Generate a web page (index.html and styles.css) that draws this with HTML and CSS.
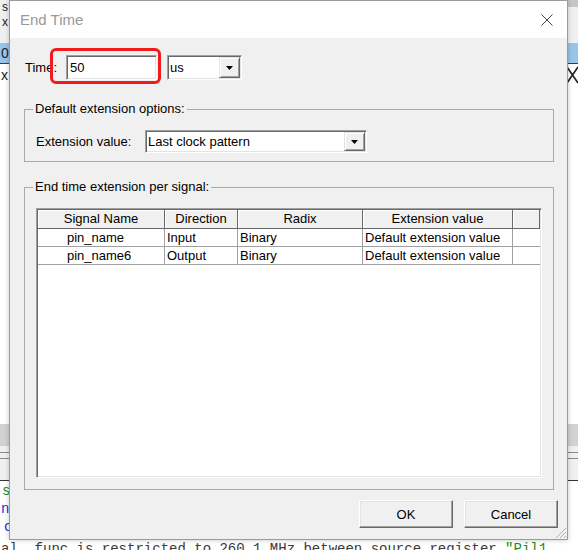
FILE: index.html
```html
<!DOCTYPE html>
<html>
<head>
<meta charset="utf-8">
<title>End Time</title>
<link rel="stylesheet" href="styles.css">
</head>
<body>
<div class="app">
  <div class="bg-top">
    <div class="bg-frag"><span>s</span><span>x</span></div>
    <div class="bg-top-right"></div>
  </div>
  <div class="bg-sel"><span class="bg-char">0</span></div>
  <div class="bg-wave">
    <span class="bg-char">x</span>
    <svg class="bg-x" width="11" height="18" viewBox="0 0 11 18"><path d="M0 1 L11 17 M0 17 L11 1" stroke="#222" stroke-width="1.6" fill="none"/></svg>
  </div>
  <div class="bg-fill"></div>
  <div class="bg-bar"></div>
  <div class="bg-lines"><div class="bg-line"></div><div class="bg-line"></div></div>
  <div class="bg-console">
    <div class="c-line c-green c-indent">s</div>
    <div class="c-line c-blue">ni</div>
    <div class="c-line c-blue c-indent2">c</div>
    <div class="c-line c-last">al  func is restricted to 260.1 MHz between source register <span class="c-green">"Pil1</span></div>
  </div>
</div>

<div class="dialog">
  <div class="titlebar">
    <span class="title">End Time</span>
    <svg class="close" width="12" height="12" viewBox="0 0 12 12"><path d="M0.5 0.5 L11.5 11.5 M11.5 0.5 L0.5 11.5" stroke="#444" stroke-width="1" fill="none"/></svg>
  </div>
  <div class="body">
    <div class="time-row">
      <span class="time-label">Time:</span>
      <div class="textbox">50</div>
      <div class="combo combo-unit">
        <span class="combo-text">us</span>
        <span class="combo-btn"><svg width="7" height="4" viewBox="0 0 7 4"><path d="M0 0 H7 L3.5 4 Z" fill="#000"/></svg></span>
      </div>
    </div>

    <fieldset class="group group-default">
      <legend>Default extension options:</legend>
      <div class="ext-row">
        <span class="ext-label">Extension value:</span>
        <div class="combo combo-ext">
          <span class="combo-text">Last clock pattern</span>
          <span class="combo-btn"><svg width="7" height="4" viewBox="0 0 7 4"><path d="M0 0 H7 L3.5 4 Z" fill="#000"/></svg></span>
        </div>
      </div>
    </fieldset>

    <fieldset class="group group-signal">
      <legend>End time extension per signal:</legend>
      <div class="listview">
        <div class="lv-row lv-head">
          <span class="cell c1">Signal Name</span>
          <span class="cell c2">Direction</span>
          <span class="cell c3">Radix</span>
          <span class="cell c4">Extension value</span>
          <span class="cell c5"></span>
        </div>
        <div class="lv-row lv-data">
          <span class="cell c1">pin_name</span>
          <span class="cell c2">Input</span>
          <span class="cell c3">Binary</span>
          <span class="cell c4">Default extension value</span>
          <span class="cell c5"></span>
        </div>
        <div class="lv-row lv-data">
          <span class="cell c1">pin_name6</span>
          <span class="cell c2">Output</span>
          <span class="cell c3">Binary</span>
          <span class="cell c4">Default extension value</span>
          <span class="cell c5"></span>
        </div>
      </div>
    </fieldset>

    <div class="buttons">
      <button class="btn">OK</button>
      <button class="btn">Cancel</button>
    </div>
  </div>
  <div class="highlight"></div>
  <svg class="grip" width="11" height="11" viewBox="0 0 11 11"><path d="M11 1 L1 11 M11 5 L5 11 M11 9 L9 11" stroke="#b4b4b4" stroke-width="1" fill="none"/></svg>
</div>
</body>
</html>
```

FILE: styles.css
```css
* { box-sizing: border-box; }
html, body { margin: 0; padding: 0; }
body {
  width: 578px;
  height: 550px;
  overflow: hidden;
  position: relative;
  background: #fff;
  font-family: "Liberation Sans", Arial, sans-serif;
}

/* background application */
.app { display: flex; flex-direction: column; height: 550px; overflow: hidden; }
.app > * { flex-shrink: 0; }
.bg-top { height: 43px; background: #f0f0f0; display: flex; justify-content: space-between; }
.bg-frag { display: flex; flex-direction: column; font-size: 12px; line-height: 15px; color: #222; padding: 0 0 0 2px; }
.bg-top-right { width: 10px; height: 7px; background: #c6c6c6; }
.bg-sel { height: 21px; background: #99c4ea; border-bottom: 1px solid #3c3c3c; color: #222; font-size: 14px; line-height: 20px; }
.bg-char { display: inline-block; padding-left: 1px; font-size: 14px; }
.bg-wave { height: 22px; display: flex; justify-content: space-between; align-items: center; color: #222; }
.bg-fill { height: 338px; }
.bg-bar { height: 22px; background: #d2d2d2; }
.bg-lines { height: 35px; background: #f0f0f0; border-bottom: 1px solid #333; padding-top: 6px; }
.bg-line { height: 1px; background: #8a8a8a; margin-bottom: 5px; }
.bg-console { flex: 1 0 auto; padding-top: 1px; font-family: "Liberation Mono", monospace; font-size: 14px; }
.c-line { height: 18px; line-height: 18px; white-space: pre; padding-left: 1px; }
.c-indent { padding-left: 2px; }
.c-indent2 { padding-left: 4px; }
.c-last { margin-top: 4px; color: #3a3a3a; }
.c-green { color: #1f8a1f; }
.c-blue { color: #2a2ae0; }

/* dialog window */
.dialog {
  position: absolute;
  left: 9px;
  top: 0;
  width: 559px;
  height: 540px;
  border: 1px solid #9b9b9b;
  background: #f0f0f0;
  display: flex;
  flex-direction: column;
  box-shadow: 0 0 5px rgba(0, 0, 0, 0.22);
  font-family: "Liberation Sans", Arial, sans-serif;
  font-size: 13px;
  color: #000;
}
.titlebar {
  height: 37px;
  background: #fff;
  display: flex;
  align-items: center;
  padding-left: 10px;
  padding-right: 14px;
}
.title { font-size: 15px; color: #999; }
.close { margin-left: auto; }

.body { flex: 1; display: flex; flex-direction: column; padding-top: 17px; }

.time-row { display: flex; align-items: center; height: 25px; margin-left: 15px; }
.time-label { width: 41px; }
.textbox {
  width: 91px;
  height: 25px;
  background: #fff;
  border-top: 1px solid #a0a0a0;
  border-left: 1px solid #a0a0a0;
  border-right: 1px solid #fff;
  border-bottom: 1px solid #fff;
  box-shadow: inset 1px 1px 0 #696969, inset -1px -1px 0 #e3e3e3;
  padding-left: 3px;
  line-height: 23px;
}

.combo {
  display: flex;
  background: #fff;
  border-top: 1px solid #a0a0a0;
  border-left: 1px solid #a0a0a0;
  border-right: 1px solid #fff;
  border-bottom: 1px solid #fff;
  box-shadow: inset 1px 1px 0 #696969, inset -1px -1px 0 #e3e3e3;
  padding: 1px;
}
.combo-text { flex: 1; padding-left: 1px; align-self: center; }
.combo-btn {
  width: 21px;
  display: flex;
  align-items: center;
  justify-content: center;
  background: #f0f0f0;
  border-top: 1px solid #e3e3e3;
  border-left: 1px solid #e3e3e3;
  border-right: 1px solid #696969;
  border-bottom: 1px solid #696969;
  box-shadow: inset 1px 1px 0 #fff, inset -1px -1px 0 #a0a0a0;
}
.combo-unit { width: 75px; height: 25px; margin-left: 10px; }
.combo-ext { width: 222px; height: 23px; }

.group {
  margin: 0 13px 0 14px;
  padding: 0;
  border: 1px solid #a9a9a9;
  min-width: 0;
}
.group legend { margin-left: 8px; padding: 0 2px; line-height: 16px; }
.group-signal { margin-top: 17px; }
.group-default { margin-top: 21px; }

.ext-row { display: flex; align-items: center; padding: 13px 11px 8px 11px; }
.ext-label { width: 109px; }

.listview {
  margin: 13px 11px 11px 11px;
  height: 270px;
  background: #fff;
  border-top: 1px solid #a0a0a0;
  border-left: 1px solid #a0a0a0;
  border-right: 1px solid #fff;
  border-bottom: 1px solid #fff;
  box-shadow: inset 1px 1px 0 #696969, inset -1px -1px 0 #e3e3e3;
  padding: 1px;
}
.lv-row { display: flex; }
.cell { display: block; white-space: nowrap; overflow: hidden; }
.c1 { width: 127px; }
.c2 { width: 73px; }
.c3 { width: 125px; }
.c4 { width: 150px; }
.c5 { flex: 1; }

.lv-head .cell {
  height: 19px;
  line-height: 18px;
  text-align: center;
  background: #f0f0f0;
  border-right: 1px solid #696969;
  border-bottom: 1px solid #696969;
  box-shadow: inset 1px 1px 0 #fff;
}
.lv-data { border-bottom: 1px solid #a0a0a0; height: 18px; }
.lv-data .cell {
  height: 17px;
  line-height: 17px;
  padding-left: 2px;
  border-right: 1px solid #a0a0a0;
}
.lv-data .c1 { padding-left: 29px; }
.lv-data .c5 { border-right: none; }

.buttons {
  display: flex;
  justify-content: flex-end;
  gap: 11px;
  margin-top: 10px;
  padding-right: 9px;
}
.btn {
  width: 94px;
  height: 28px;
  margin: 0;
  padding: 0;
  font-family: "Liberation Sans", Arial, sans-serif;
  font-size: 13px;
  color: #000;
  background: #f0f0f0;
  border-top: 1px solid #fff;
  border-left: 1px solid #fff;
  border-right: 1px solid #696969;
  border-bottom: 1px solid #696969;
  box-shadow: inset -1px -1px 0 #a0a0a0, inset 1px 1px 0 #e3e3e3;
}

.highlight {
  position: absolute;
  left: 40px;
  top: 47px;
  width: 111px;
  height: 36px;
  border: 3px solid #f01c1c;
  border-radius: 6px;
}
.grip { position: absolute; right: 1px; bottom: 1px; }
```
